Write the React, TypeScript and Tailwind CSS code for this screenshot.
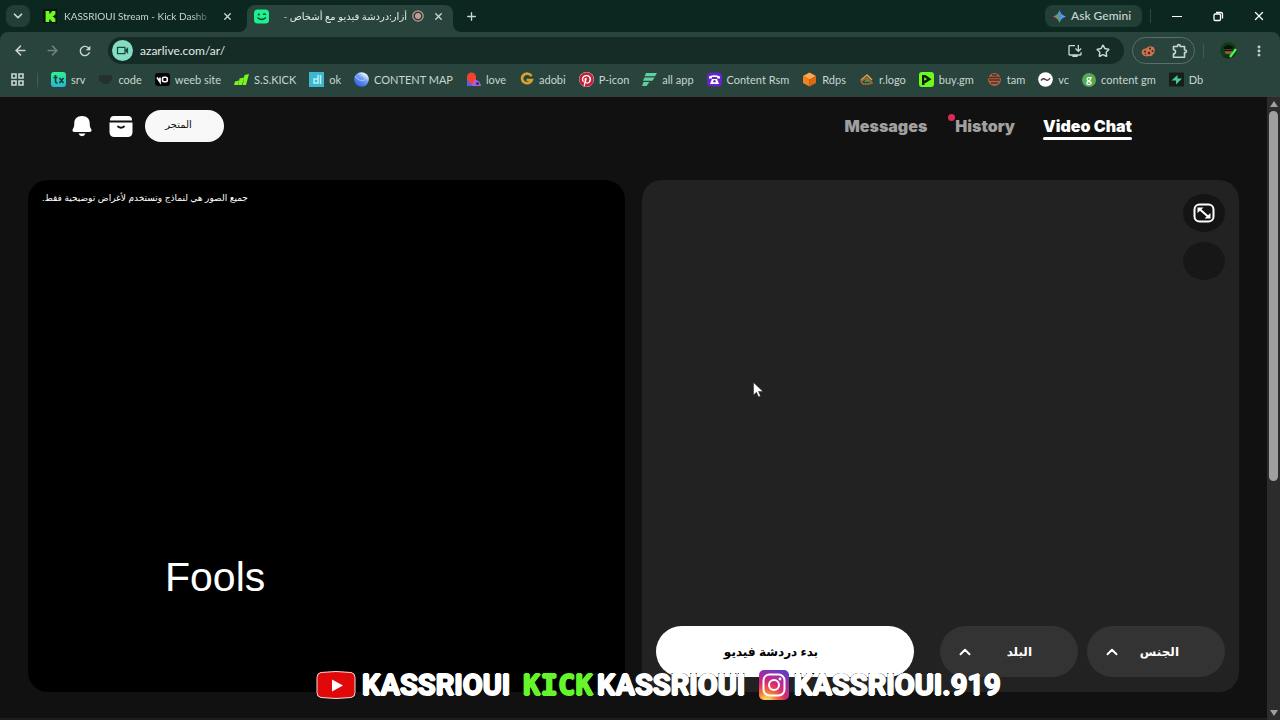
import React from "react";
import {
  ChevronDown,
  ChevronUp,
  X,
  Plus,
  ArrowLeft,
  ArrowRight,
  Star,
  EllipsisVertical,
} from "lucide-react";
import { FaPinterest } from "react-icons/fa";
import { MdOutlineVideocam, MdInstallDesktop, MdRefresh } from "react-icons/md";
import { SiKick } from "react-icons/si";

const box = "h-[15px] w-[15px] shrink-0";

const bookmarks: { label: string; icon: React.ReactNode }[] = [
  {
    label: "srv",
    icon: (
      <svg viewBox="0 0 15 15" className={box}>
        <defs>
          <linearGradient id="srv" x1="0" y1="0" x2="0" y2="1">
            <stop offset="0" stopColor="#2ff08d" />
            <stop offset="1" stopColor="#28b5d6" />
          </linearGradient>
        </defs>
        <rect width="15" height="15" rx="3" fill="url(#srv)" />
        <path d="M4.5 3v6.500q0 1.500 2 1.500M2.500 5.500h4M8.500 6l4 5M12.500 6l-4 5" stroke="#0d3b3f" strokeWidth="1.600" fill="none" />
      </svg>
    ),
  },
  {
    label: "code",
    icon: (
      <svg viewBox="0 0 15 15" className={box}>
        <path d="M1 3h13v5l-4 4H5L1 8z" fill="#26302d" />
      </svg>
    ),
  },
  {
    label: "weeb site",
    icon: (
      <svg viewBox="0 0 15 15" className={box}>
        <rect y="1" width="15" height="13" rx="3" fill="#050505" />
        <path d="M2 5.500l3 4.500V5.500" stroke="#fff" strokeWidth="1.700" fill="none" />
        <rect x="7.500" y="5.300" width="4.800" height="4.400" rx="1.500" stroke="#fff" strokeWidth="1.600" fill="none" />
      </svg>
    ),
  },
  {
    label: "S.S.KICK",
    icon: (
      <svg viewBox="0 0 15 15" className={box} fill="#7df51c">
        <path d="M1 9.500l4-1-1 4.500H0zM5.500 6.500l4.500-1L8 13H4.300zM10.500 3l4.500-1-3 11H8.700z" />
      </svg>
    ),
  },
  {
    label: "ok",
    icon: (
      <svg viewBox="0 0 15 15" className={box}>
        <rect width="15" height="15" fill="#3cb7cf" />
        <path d="M9 3v8H5V7h4M11.500 3v9" stroke="#b9f1f5" strokeWidth="1.500" fill="none" />
      </svg>
    ),
  },
  {
    label: "CONTENT MAP",
    icon: (
      <svg viewBox="0 0 15 15" className={box}>
        <defs>
          <linearGradient id="map" x1="1" y1="0" x2="0.300" y2="1">
            <stop offset="0.250" stopColor="#dceaff" />
            <stop offset="0.500" stopColor="#6f9df5" />
            <stop offset="1" stopColor="#2e5fe0" />
          </linearGradient>
        </defs>
        <circle cx="7.500" cy="7.500" r="7.300" fill="url(#map)" />
        <path d="M1 4q4 6 10 4" stroke="#a9c8ff" fill="none" />
      </svg>
    ),
  },
  {
    label: "love",
    icon: (
      <svg viewBox="0 0 15 15" className={box}>
        <path d="M1 14V5a4.500 4.500 0 0 1 9 0v9z" fill="#f0442f" />
        <path d="M1 14V8l6 6z" fill="#4b63f2" />
        <path d="M6 14l2-6q6-1 7 6z" fill="#b05bf0" />
        <circle cx="11.500" cy="11.500" r="1.600" fill="#26433b" />
      </svg>
    ),
  },
  {
    label: "adobi",
    icon: (
      <svg viewBox="0 0 15 15" className={box}>
        <path d="M12.500 4.200A5 4.800 0 1 0 12.800 8H7.500" stroke="#d3a22f" strokeWidth="2.700" fill="none" />
      </svg>
    ),
  },
  {
    label: "P-icon",
    icon: (
      <span className="flex h-[15px] w-[15px] shrink-0 items-center justify-center rounded-full bg-white">
        <FaPinterest className="h-[15px] w-[15px] text-[#c51f35]" />
      </span>
    ),
  },
  {
    label: "all app",
    icon: (
      <svg viewBox="0 0 15 15" className={box} fill="#62cfa0">
        <path d="M4 1h11l-2 3.300H2.500zM2.500 5.500h10l-2 3.300H1zM1.500 10h6L4.500 14H0z" />
      </svg>
    ),
  },
  {
    label: "Content Rsm",
    icon: (
      <svg viewBox="0 0 15 15" className={box}>
        <rect y="0.500" width="15" height="14" rx="4" fill="#6425c9" />
        <path d="M2 6.500V4.500q5.500-2.500 11 0v2h-3V5h-5v1.500zM5 7h5l2 5H3z" fill="#fff" />
        <circle cx="7.500" cy="9.300" r="1.200" fill="#6425c9" />
      </svg>
    ),
  },
  {
    label: "Rdps",
    icon: (
      <svg viewBox="0 0 15 15" className={box}>
        <path d="M7.500 0.500l6.500 3.500-6.500 3.500L1 4z" fill="#ffa64a" />
        <path d="M1 4l6.500 3.500v7L1 11z" fill="#f58220" />
        <path d="M14 4L7.500 7.500v7L14 11z" fill="#dc6a12" />
      </svg>
    ),
  },
  {
    label: "r.logo",
    icon: (
      <svg viewBox="0 0 15 15" className={box} fill="none" strokeWidth="1.600">
        <path d="M2 8l6-5 5 5" stroke="#d9a441" />
        <path d="M4 12L2 9l6-3 5 5-3 1z" stroke="#b0663b" />
        <path d="M6 10l2-2 2 2" stroke="#4fa05a" />
      </svg>
    ),
  },
  {
    label: "buy.gm",
    icon: (
      <svg viewBox="0 0 15 15" className={box}>
        <rect width="15" height="15" rx="3" fill="#6bfb1d" />
        <path d="M3 13V3h3.500l6 4.200-6 3.800H5.500v2z" fill="#0a1c05" />
        <path d="M5.200 5.200v3.600l3-1.800z" fill="#6bfb1d" />
      </svg>
    ),
  },
  {
    label: "tam",
    icon: (
      <svg viewBox="0 0 15 15" className={box}>
        <circle cx="7.500" cy="7.500" r="6.500" fill="#b9603f" />
        <path d="M1 5.500h13M2 8h11M4 11h7M5 3h5" stroke="#45332b" strokeWidth="1.300" />
      </svg>
    ),
  },
  {
    label: "vc",
    icon: (
      <svg viewBox="0 0 15 15" className={box}>
        <circle cx="7.500" cy="7.500" r="7.300" fill="#fff" />
        <path d="M3 8.500q2-3 4.500-1T12 6" stroke="#4d3535" strokeWidth="1.400" fill="none" />
      </svg>
    ),
  },
  {
    label: "content gm",
    icon: (
      <span className="flex h-[14px] w-[14px] shrink-0 items-center justify-center rounded-full bg-[#55aa50] text-[11px] leading-none font-bold text-white">
        <span className="pb-[3px]">g</span>
      </span>
    ),
  },
  {
    label: "Db",
    icon: (
      <svg viewBox="0 0 15 15" className={box}>
        <rect y="0.500" width="15" height="14" rx="1" fill="#161e1c" />
        <path d="M8.500 3v3.500H13L7 12.500V8.500H2.500z" fill="#3ecf8e" />
      </svg>
    ),
  },
];

const banner =
  "font-['Roboto',sans-serif] text-[29px] leading-8 font-bold text-white [-webkit-text-stroke:2px_black] [paint-order:stroke_fill] [text-shadow:1px_0_0_#fff,-1px_0_0_#fff,0_1px_0_#fff,0_-1px_0_#fff]";

function TabStrip() {
  return (
    <header className="flex h-8 shrink-0 items-center bg-[#0c2620] pl-[6px]">
      <button aria-label="Search tabs" className="flex h-[22px] w-6 items-center justify-center rounded-lg bg-[#213f37]">
        <ChevronDown className="h-[14px] w-[14px]" strokeWidth={3} />
      </button>
      <div className="ml-[13px] flex w-[190px] items-center">
        <span className="flex h-[14px] w-[14px] items-center justify-center bg-[#07140b]">
          <SiKick className="h-[11px] w-[11px] text-[#6dfb22]" />
        </span>
        <a
          href="#kick"
          className="ml-[7px] w-[150px] whitespace-nowrap text-[10px] [mask-image:linear-gradient(to_right,black_85%,transparent)]"
        >
          KASSRIOUI Stream - Kick Dashb
        </a>
        <button aria-label="Close tab" className="ml-2">
          <X className="h-[11px] w-[11px]" strokeWidth={3} />
        </button>
      </div>
      <div className="relative ml-[14px] flex h-[27px] w-[206px] items-center self-end rounded-t-lg bg-[#28443c] pb-[5px] pl-[7px]">
        <svg viewBox="0 0 8 8" className="absolute bottom-0 -left-2 h-2 w-2" fill="#28443c">
          <path d="M8 0v8H0a8 8 0 0 0 8-8z" />
        </svg>
        <svg viewBox="0 0 8 8" className="absolute -right-2 bottom-0 h-2 w-2" fill="#28443c">
          <path d="M0 0v8h8a8 8 0 0 1-8-8z" />
        </svg>
        <svg viewBox="0 0 15 15" className={box}>
          <rect width="15" height="14" y="0.500" rx="3.500" fill="#1df08f" />
          <circle cx="4.800" cy="5.500" r="1.100" fill="#0c4530" />
          <path d="M9 5.500q1.500-1 3 0M3.500 8.500q4 4 8.500 0" stroke="#0c4530" strokeWidth="1.300" fill="none" />
        </svg>
        <a
          href="#azar"
          dir="rtl"
          className="ml-2 w-[130px] whitespace-nowrap text-[10px] text-[#e3ece8] [mask-image:linear-gradient(to_left,black_92%,transparent)]"
        >
          أزار:دردشة فيديو مع أشخاص -
        </a>
        <svg viewBox="0 0 12 12" className="ml-[5px] h-3 w-3" fill="none" stroke="#c79a90">
          <circle cx="6" cy="6" r="5.200" strokeWidth="1.200" />
          <circle cx="6" cy="6" r="3" fill="#c79a90" stroke="none" />
        </svg>
        <button aria-label="Close tab" className="ml-[9px]">
          <X className="h-[11px] w-[11px]" strokeWidth={3} />
        </button>
      </div>
      <button aria-label="New tab" className="ml-3">
        <Plus className="h-[13px] w-[13px]" strokeWidth={2.500} />
      </button>
      <button className="ml-auto flex h-[22px] w-[97px] items-center gap-[5px] rounded-lg bg-[#213f37] pl-2 text-[12px] font-medium">
        <svg viewBox="0 0 13 13" className="h-[13px] w-[13px]">
          <defs>
            <linearGradient id="gem" x1="0" y1="0.600" x2="1" y2="0.400">
              <stop offset="0.100" stopColor="#e05a55" />
              <stop offset="0.400" stopColor="#5fa36c" />
              <stop offset="0.550" stopColor="#4a8df0" />
              <stop offset="1" stopColor="#7aa2f5" />
            </linearGradient>
          </defs>
          <path d="M6.500 0q1.400 5 6.500 6.500-5.100 1.500-6.500 6.500Q5.100 8 0 6.500 5.100 5 6.500 0z" fill="url(#gem)" />
        </svg>
        <span className="whitespace-nowrap">Ask Gemini</span>
      </button>
      <span className="ml-2 h-[14px] w-px bg-[#2d4a42]" />
      <button aria-label="Minimize" className="ml-[21px] flex h-6 w-3 items-center">
        <span className="h-px w-[10px] bg-white" />
      </button>
      <button aria-label="Restore" className="ml-[29px]">
        <svg viewBox="0 0 11 11" className="h-[11px] w-[11px]" fill="none" stroke="#fff" strokeWidth="1.300">
          <rect x="1" y="3" width="6.500" height="6.500" rx="1.200" />
          <path d="M3 1.500h5q1.500 0 1.500 1.500v4.500" />
        </svg>
      </button>
      <button aria-label="Close" className="mr-[14px] ml-7">
        <X className="h-[14px] w-[14px] text-white" strokeWidth={2.200} />
      </button>
    </header>
  );
}

function Toolbar() {
  return (
    <div className="bg-[#0c2620]">
      <div className="flex h-[33px] items-center rounded-t-lg bg-[#28443c] pt-1 pl-[13px]">
        <button aria-label="Back"><ArrowLeft className="h-[15px] w-[15px]" strokeWidth={2.300} /></button>
        <button aria-label="Forward" className="ml-[17px] text-[#6f857e]"><ArrowRight className="h-[15px] w-[15px]" strokeWidth={2.300} /></button>
        <button aria-label="Reload" className="ml-[17px]"><MdRefresh className="h-4 w-4" /></button>
        <div className="ml-[15px] flex h-[27px] flex-1 items-center rounded-full bg-[#142b26] pr-[14px] pl-1">
          <span className="flex h-[21px] w-[21px] items-center justify-center rounded-full bg-[#84dcc3] text-[#1a4a3e]">
            <MdOutlineVideocam className="h-[15px] w-[15px]" />
          </span>
          <input
            aria-label="Address"
            defaultValue="azarlive.com/ar/"
            className="ml-[7px] min-w-0 flex-1 bg-transparent text-[12px] text-[#e3ece8] outline-none"
          />
          <button aria-label="Install app"><MdInstallDesktop className="h-4 w-4" /></button>
          <button aria-label="Bookmark this page" className="ml-[13px]"><Star className="h-[14px] w-[14px]" strokeWidth={2.500} /></button>
        </div>
        <div className="ml-2 flex h-[27px] w-[63px] items-center justify-between rounded-full border border-[#587069] pr-[6px] pl-2">
          <button aria-label="Cookies">
            <svg viewBox="0 0 14 12" className="h-3 w-[14px]">
              <path d="M1 9q-1.500-5 4-5.500Q9-.5 13 2.500q2 4-1 7-1.500 2.500-4 1.500-5 1.500-7-2z" fill="#c97150" />
              <g fill="#3a2620">
                <circle cx="4" cy="6.500" r="1" />
                <circle cx="9" cy="3.500" r="1" />
                <circle cx="8" cy="8" r="1.200" />
                <circle cx="11.500" cy="6" r="0.900" />
                <circle cx="4.500" cy="9.300" r="0.700" />
              </g>
            </svg>
          </button>
          <button aria-label="Extensions">
            <svg viewBox="0 0 17 16" className="h-4 w-[17px]" fill="none" stroke="currentColor" strokeWidth="1.600">
              <path d="M2.500 3.500h4V2.800a1.300 1.300 0 0 1 2.600 0v.7h4.400V7h.7a1.300 1.300 0 0 1 0 2.600h-.7v4.600h-11v-3.400a2 2 0 0 0 0-4z" strokeLinejoin="round" />
            </svg>
          </button>
        </div>
        <span className="ml-2 h-[14px] w-px bg-[#3f5b53]" />
        <button aria-label="Profile" className="ml-4">
          <svg viewBox="0 0 17 17" className="h-[17px] w-[17px]">
            <circle cx="8.500" cy="8.500" r="8.200" fill="#0b3d17" />
            <path d="M4 5q4.500-4 9 0v2H4z" fill="#0a120a" />
            <path d="M5 7h7v4q-3.500 3-7 0z" fill="#8d5b3c" />
            <path d="M5 7.500h7v1.600H5z" fill="#111" />
            <path d="M3 15q5-4 8-2l-2 3.500z" fill="#152b17" />
            <path d="M10 15l6-8" stroke="#4dfb4a" strokeWidth="2.200" />
          </svg>
        </button>
        <button aria-label="Menu" className="mr-[14px] ml-[15px]"><EllipsisVertical className="h-[14px] w-[14px]" strokeWidth={3} /></button>
      </div>
      <nav aria-label="Bookmarks" className="flex h-8 items-center border-b border-[#33413c] bg-[#28443c] pb-[2px] pl-[11px]">
        <svg viewBox="0 0 13 13" className="h-[13px] w-[13px] shrink-0" fill="none" stroke="currentColor" strokeWidth="1.600">
          <path d="M1 1h4v4H1zM8 1h4v4H8zM1 8h4v4H1zM8 8h4v4H8z" />
        </svg>
        <span className="mr-[13px] ml-[13px] h-[14px] w-px shrink-0 bg-[#3f5b53]" />
        <div className="flex gap-[13px]">
          {bookmarks.map((b) => (
            <a key={b.label} href="#bookmark" className="flex items-center gap-[5px] whitespace-nowrap">
              {b.icon}
              {b.label}
            </a>
          ))}
        </div>
      </nav>
    </div>
  );
}

function SiteHeader() {
  return (
    <div className="flex h-[57px] items-center justify-between pr-[135px] pl-[72px]">
      <div className="flex items-center">
        <button aria-label="Notifications">
          <svg viewBox="0 0 20 22" className="h-[22px] w-5" fill="#fff">
            <path d="M10 1C5 1 2.300 4 2.300 8c0 3-.4 4.500-1.400 6-1 1.500-.3 3 1.500 3h15.200c1.800 0 2.500-1.500 1.500-3-1-1.500-1.400-3-1.400-6C17.700 4 15 1 10 1zM6.500 18.600h7q-1 2.600-3.500 2.600t-3.500-2.600z" />
          </svg>
        </button>
        <button aria-label="Inbox" className="ml-[17px]">
          <svg viewBox="0 0 24 22" className="h-[22px] w-6" fill="#fff">
            <path d="M1 5.500V5q0-4 4-4h14q4 0 4 4v.5zM.5 7.500h23V17q0 5-5 5h-13q-5 0-5-5z" />
            <path d="M9 11.500q3 2.500 6 0" fill="none" stroke="#111" strokeWidth="1.800" strokeLinecap="round" />
          </svg>
        </button>
        <button className="ml-3 h-8 w-[79px] rounded-full bg-[#f8f8f8] pr-3 pb-[2px] font-['DejaVu_Sans',sans-serif] text-[10px] text-[#111]">
          المتجر
        </button>
      </div>
      <nav aria-label="Site" className="flex gap-7 font-['Inter',sans-serif] text-[16px] leading-5 font-black text-[#a0a0a0]">
        <a href="#messages">Messages</a>
        <a href="#history" className="relative">
          <span className="absolute -top-[2px] -left-[7px] h-[7px] w-[7px] rounded-full bg-[#e02950]" />
          History
        </a>
        <a href="#video" className="relative text-white">
          Video Chat
          <span className="absolute -bottom-1 left-0 h-[3px] w-full rounded-full bg-white" />
        </a>
      </nav>
    </div>
  );
}

function Filter({ label }: { label: string }) {
  return (
    <button className="flex h-[51px] w-[138px] items-center rounded-full bg-[#333] pr-[46px] pl-4 text-[12px] font-bold text-white">
      <ChevronUp className="h-[18px] w-[18px] shrink-0" strokeWidth={2.600} />
      <span className="flex-1 text-right">{label}</span>
    </button>
  );
}

function VideoPanels() {
  return (
    <main className="mt-[26px] grid min-h-0 flex-1 grid-cols-2 gap-[17px] px-7 font-['Liberation_Sans','DejaVu_Sans',sans-serif]">
      <section className="flex flex-col items-start justify-between rounded-[20px] bg-black pt-[10px] pb-[91px] text-white">
        <p dir="rtl" className="pl-[14px] text-[9px] leading-4">
          جميع الصور هي لنماذج وتستخدم لأغراض توضيحية فقط.
        </p>
        <h1 className="pl-[137px] text-[41px] leading-[48px]">Fools</h1>
      </section>
      <section className="flex flex-col justify-between rounded-[20px] bg-[#222] px-[14px] pt-[14px] pb-[15px]">
        <div className="flex flex-col items-end gap-[10px]">
          <button aria-label="Resize" className="flex h-[38px] w-[42px] items-center justify-center rounded-[50%] bg-[#141414]">
            <svg viewBox="0 0 22 20" className="h-5 w-[22px]" fill="none" stroke="#fff" strokeWidth="2">
              <rect x="1.500" y="1.500" width="19" height="17" rx="5" />
              <path d="M6.500 6l9 8" />
              <path d="M4.500 4.500h6l-6 5.500zM17.500 15.500h-6l6-5.500z" fill="#fff" stroke="none" />
            </svg>
          </button>
          <button aria-label="More" className="h-[38px] w-[42px] rounded-[50%] bg-[#171717]" />
        </div>
        <div className="flex gap-[9px]">
          <button className="mr-[17px] h-[51px] flex-1 rounded-full bg-white pr-7 text-[12px] font-bold text-black">
            بدء دردشة فيديو
          </button>
          <Filter label="البلد" />
          <Filter label="الجنس" />
        </div>
      </section>
    </main>
  );
}

function Scrollbar() {
  return (
    <div aria-hidden="true" className="flex w-[13px] flex-col items-center bg-[#2c2c2c] py-1">
      <svg viewBox="0 0 8 6" className="h-[6px] w-2" fill="#a0a0a0"><path d="M4 0l4 6H0z" /></svg>
      <div className="mt-1 mb-[3px] w-full flex-1 px-[2px]">
        <div className="h-[62%] w-[9px] rounded-full bg-[#9f9f9f]" />
      </div>
      <svg viewBox="0 0 8 6" className="h-[6px] w-2" fill="#a0a0a0"><path d="M4 6l4-6H0z" /></svg>
    </div>
  );
}

function SocialBanner() {
  return (
    <div className="absolute bottom-[19px] left-[316px] flex h-8 items-center whitespace-nowrap">
      <svg viewBox="0 0 40 28" className="h-7 w-10">
        <path d="M5 1.500Q20-.5 35 1.500q4 .5 4 5v15q0 4.500-4 5-15 2-30 0-4-.5-4-5v-15q0-4.500 4-5z" fill="#e00808" stroke="#f3dada" strokeWidth="1" />
        <path d="M16 8.500v12l11-6z" fill="#fff" />
      </svg>
      <span className={"ml-[6px] w-[161px] " + banner}>KASSRIOUI</span>
      <span className="w-[74px] font-['DejaVu_Sans_Mono',monospace] text-[29px] leading-8 font-bold text-[#66f52b] [-webkit-text-stroke:2px_black] [paint-order:stroke_fill] [text-shadow:1px_0_0_#66f52b,-1px_0_0_#66f52b,0_1px_0_#66f52b,0_-1px_0_#66f52b]">
        KICK
      </span>
      <span className={"w-[161px] " + banner}>KASSRIOUI</span>
      <svg viewBox="0 0 32 32" className="h-8 w-8">
        <defs>
          <radialGradient id="ig" cx="0.250" cy="1.050" r="1.150">
            <stop offset="0.100" stopColor="#fdd05a" />
            <stop offset="0.300" stopColor="#f5713a" />
            <stop offset="0.550" stopColor="#d62a73" />
            <stop offset="0.800" stopColor="#a32ba8" />
            <stop offset="1" stopColor="#5b3fc4" />
          </radialGradient>
        </defs>
        <rect x="1" y="1" width="30" height="30" rx="5" fill="url(#ig)" />
        <g fill="none" stroke="#fff" strokeWidth="2">
          <rect x="5.500" y="5.500" width="21" height="21" rx="6" />
          <circle cx="16" cy="16" r="5" />
        </g>
        <circle cx="22" cy="10" r="1.400" fill="#fff" />
      </svg>
      <span className={"ml-1 " + banner}>KASSRIOUI.919</span>
    </div>
  );
}

export default function App() {
  return (
    <div className="relative flex h-dvh flex-col overflow-hidden bg-[#111] font-['Lato','DejaVu_Sans',sans-serif] text-[11px] leading-4 text-[#c9d6d1]">
      <TabStrip />
      <Toolbar />
      <div className="flex min-h-0 flex-1">
        <div className="flex min-w-0 flex-1 flex-col border-b-2 border-[#1e1c1c] pb-[26px]">
          <SiteHeader />
          <VideoPanels />
        </div>
        <Scrollbar />
      </div>
      <SocialBanner />
      <svg viewBox="0 0 11 16" className="absolute top-[382px] left-[753px] h-4 w-[11px]">
        <path d="M.5.5v12.500l3-2.700 2 4.700 2-.9-2-4.600h4.500z" fill="#fff" stroke="#222" strokeWidth="0.500" />
      </svg>
    </div>
  );
}
